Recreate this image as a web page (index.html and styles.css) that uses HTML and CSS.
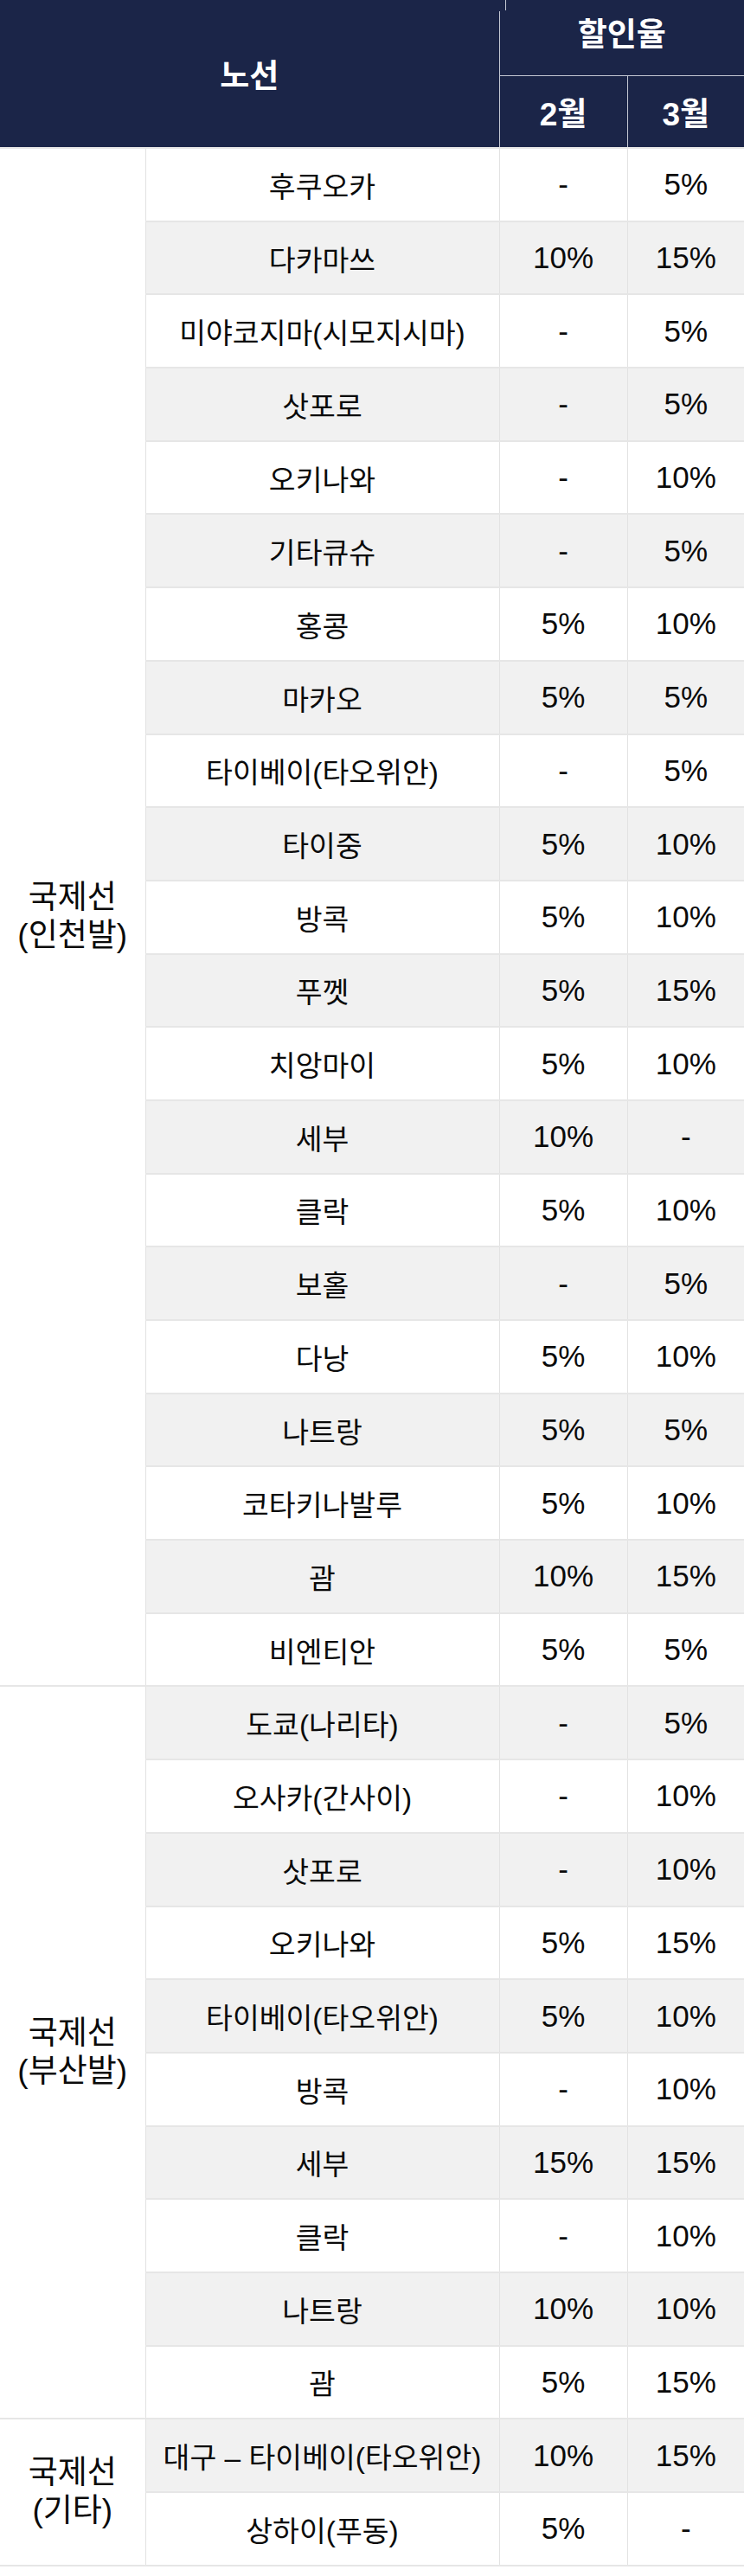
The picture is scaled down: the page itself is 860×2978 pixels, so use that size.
FILE: index.html
```html
<!DOCTYPE html>
<html lang="ko">
<head>
<meta charset="utf-8">
<title>노선별 할인율</title>
<link rel="stylesheet" href="styles.css">
</head>
<body>
<table class="rates">
  <colgroup>
    <col class="c-cat"><col class="c-route"><col class="c-m"><col class="c-m2">
  </colgroup>
  <thead>
    <tr class="h1">
      <th class="th-route" colspan="2" rowspan="2">노선</th>
      <th class="th-rate" colspan="2">할인율</th>
    </tr>
    <tr class="h2">
      <th class="th-month">2월</th>
      <th class="th-month">3월</th>
    </tr>
  </thead>
  <tbody>
    <tr><td class="cat" rowspan="21">국제선<br>(인천발)</td><td class="route">후쿠오카</td><td class="num">-</td><td class="num">5%</td></tr>
    <tr class="alt"><td class="route">다카마쓰</td><td class="num">10%</td><td class="num">15%</td></tr>
    <tr><td class="route">미야코지마(시모지시마)</td><td class="num">-</td><td class="num">5%</td></tr>
    <tr class="alt"><td class="route">삿포로</td><td class="num">-</td><td class="num">5%</td></tr>
    <tr><td class="route">오키나와</td><td class="num">-</td><td class="num">10%</td></tr>
    <tr class="alt"><td class="route">기타큐슈</td><td class="num">-</td><td class="num">5%</td></tr>
    <tr><td class="route">홍콩</td><td class="num">5%</td><td class="num">10%</td></tr>
    <tr class="alt"><td class="route">마카오</td><td class="num">5%</td><td class="num">5%</td></tr>
    <tr><td class="route">타이베이(타오위안)</td><td class="num">-</td><td class="num">5%</td></tr>
    <tr class="alt"><td class="route">타이중</td><td class="num">5%</td><td class="num">10%</td></tr>
    <tr><td class="route">방콕</td><td class="num">5%</td><td class="num">10%</td></tr>
    <tr class="alt"><td class="route">푸껫</td><td class="num">5%</td><td class="num">15%</td></tr>
    <tr><td class="route">치앙마이</td><td class="num">5%</td><td class="num">10%</td></tr>
    <tr class="alt"><td class="route">세부</td><td class="num">10%</td><td class="num">-</td></tr>
    <tr><td class="route">클락</td><td class="num">5%</td><td class="num">10%</td></tr>
    <tr class="alt"><td class="route">보홀</td><td class="num">-</td><td class="num">5%</td></tr>
    <tr><td class="route">다낭</td><td class="num">5%</td><td class="num">10%</td></tr>
    <tr class="alt"><td class="route">나트랑</td><td class="num">5%</td><td class="num">5%</td></tr>
    <tr><td class="route">코타키나발루</td><td class="num">5%</td><td class="num">10%</td></tr>
    <tr class="alt"><td class="route">괌</td><td class="num">10%</td><td class="num">15%</td></tr>
    <tr><td class="route">비엔티안</td><td class="num">5%</td><td class="num">5%</td></tr>

    <tr class="alt"><td class="cat" rowspan="10">국제선<br>(부산발)</td><td class="route">도쿄(나리타)</td><td class="num">-</td><td class="num">5%</td></tr>
    <tr><td class="route">오사카(간사이)</td><td class="num">-</td><td class="num">10%</td></tr>
    <tr class="alt"><td class="route">삿포로</td><td class="num">-</td><td class="num">10%</td></tr>
    <tr><td class="route">오키나와</td><td class="num">5%</td><td class="num">15%</td></tr>
    <tr class="alt"><td class="route">타이베이(타오위안)</td><td class="num">5%</td><td class="num">10%</td></tr>
    <tr><td class="route">방콕</td><td class="num">-</td><td class="num">10%</td></tr>
    <tr class="alt"><td class="route">세부</td><td class="num">15%</td><td class="num">15%</td></tr>
    <tr><td class="route">클락</td><td class="num">-</td><td class="num">10%</td></tr>
    <tr class="alt"><td class="route">나트랑</td><td class="num">10%</td><td class="num">10%</td></tr>
    <tr><td class="route">괌</td><td class="num">5%</td><td class="num">15%</td></tr>

    <tr class="alt"><td class="cat" rowspan="2">국제선<br>(기타)</td><td class="route">대구 – 타이베이(타오위안)</td><td class="num">10%</td><td class="num">15%</td></tr>
    <tr><td class="route">상하이(푸동)</td><td class="num">5%</td><td class="num">-</td></tr>
  </tbody>
</table>
</body>
</html>
```

FILE: styles.css
```css
html, body {
  margin: 0;
  padding: 0;
  background: #ffffff;
}

body {
  font-family: "Liberation Sans", "Noto Sans CJK KR", sans-serif;
  color: #0a0a0a;
}

.rates {
  width: 860px;
  border-collapse: collapse;
  table-layout: fixed;
}

.c-cat { width: 168px; }
.c-route { width: 409px; }
.c-m { width: 148px; }
.c-m2 { width: 135px; }

.rates th {
  background: #1b2548;
  color: #ffffff;
  font-weight: 700;
  font-size: 37px;
  text-align: center;
  vertical-align: middle;
  padding: 0;
  border: 1px solid #c4c8d3;
  border-top: none;
}

.rates .h1 { height: 87px; }
.rates .h2 { height: 84px; }

.th-route {
  border-left: none !important;
  border-bottom: 1px solid #d6d9e0 !important;
}

.th-rate {
  position: relative;
  border-right: none !important;
  line-height: 1;
  padding-bottom: 6px !important;
}

.th-rate::before {
  content: "";
  position: absolute;
  left: -1px;
  top: 0;
  width: 2px;
  height: 13px;
  background: #1b2548;
}

.th-rate::after {
  content: "";
  position: absolute;
  left: 6px;
  top: 0;
  width: 1px;
  height: 12px;
  background: #c4c8d3;
}

.th-month {
  font-size: 38px;
  border-bottom: 1px solid #d6d9e0 !important;
}

.th-month:last-child {
  border-right: none;
}

.rates tbody tr {
  height: 84.7px;
}

.rates td {
  padding: 0;
  text-align: center;
  vertical-align: middle;
  border: 1px solid #e2e2e2;
  border-top: 2px solid #e6e6e6;
  border-bottom: 2px solid #e6e6e6;
  background: #ffffff;
}

.rates td:last-child {
  border-right: none;
}

.rates tr.alt td {
  background: #f1f1f1;
}

.rates tr.alt td.cat {
  background: #ffffff;
}

.cat {
  border-left: none !important;
  font-size: 37px;
  line-height: 44px;
}

.route {
  font-size: 33.5px;
}

.num {
  font-size: 35px;
}
```
